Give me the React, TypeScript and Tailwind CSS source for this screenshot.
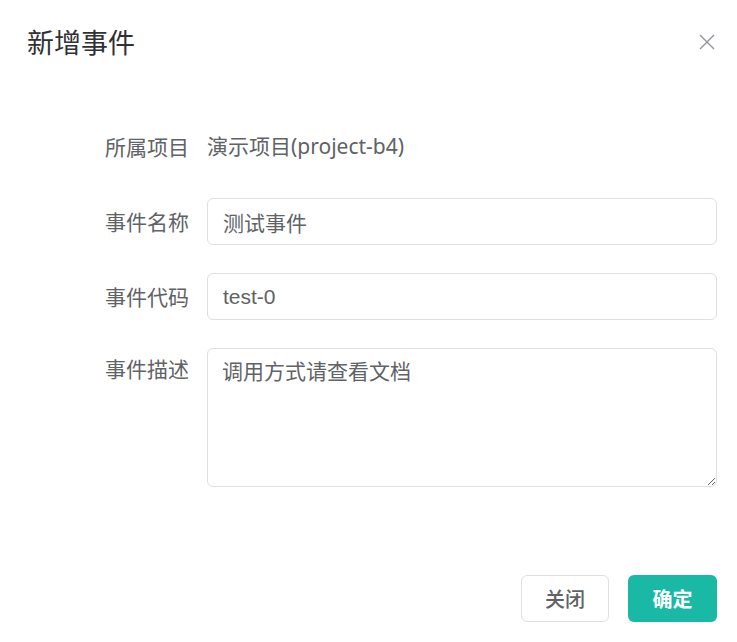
import React from 'react';

const labelCls =
  "w-[189px] shrink-0 text-right text-[21px] text-[#606266] leading-[47px] [font-family:'Noto_Sans_CJK_SC',sans-serif]";
const inputCls =
  "ml-[18px] flex-1 h-[47px] rounded-[6px] border border-[#dcdfe6] px-[15px] text-[21px] text-[#606266] outline-none [font-family:'Liberation_Sans','Noto_Sans_CJK_SC',sans-serif]";

const App = () => {
  return (
    <div className="w-[737px] h-[642px] bg-white flex flex-col [font-family:'Noto_Sans_CJK_SC',sans-serif]">
      {/* Header */}
      <div className="flex items-center justify-between pl-[27px] pr-[22px] pt-[23px]">
        <span className="text-[27px] leading-[38px] text-[#303133]">新增事件</span>
        <button type="button" className="w-[16px] h-[16px] flex items-center justify-center">
          <svg width="16" height="16" viewBox="0 0 16 16" fill="none" stroke="#909399" strokeWidth="1.4">
            <path d="M1 1L15 15M15 1L1 15" />
          </svg>
        </button>
      </div>

      {/* Form */}
      <div className="mt-[62px] pr-[20px] flex flex-col gap-[28px]">
        <div className="flex items-center h-[47px]">
          <span className={labelCls}>所属项目</span>
          <span className="ml-[18px] text-[21px] text-[#606266] [font-family:'Noto_Sans','Noto_Sans_CJK_SC',sans-serif]">
            演示项目(project-b4)
          </span>
        </div>
        <div className="flex items-center">
          <span className={labelCls}>事件名称</span>
          <input className={inputCls} defaultValue="测试事件" />
        </div>
        <div className="flex items-center">
          <span className={labelCls}>事件代码</span>
          <input className={inputCls} defaultValue="test-0" />
        </div>
        <div className="flex items-start">
          <span className={`${labelCls} -mt-[3px]`}>事件描述</span>
          <textarea
            className="ml-[18px] flex-1 h-[139px] rounded-[6px] border border-[#dcdfe6] px-[14px] py-[6px] text-[21px] leading-[31px] text-[#606266] outline-none [font-family:'Noto_Sans_CJK_SC',sans-serif]"
            defaultValue="调用方式请查看文档"
          />
        </div>
      </div>

      {/* Footer */}
      <div className="mt-[88px] pr-[20px] flex justify-end gap-[19px]">
        <button
          type="button"
          className="w-[88px] h-[47px] rounded-[6px] border border-[#dcdfe6] bg-white text-[20px] font-medium text-[#606266]"
        >
          关闭
        </button>
        <button
          type="button"
          className="w-[89px] h-[47px] rounded-[6px] bg-[#19b9a6] text-[20px] font-bold text-white"
        >
          确定
        </button>
      </div>
    </div>
  );
};

export default App;
